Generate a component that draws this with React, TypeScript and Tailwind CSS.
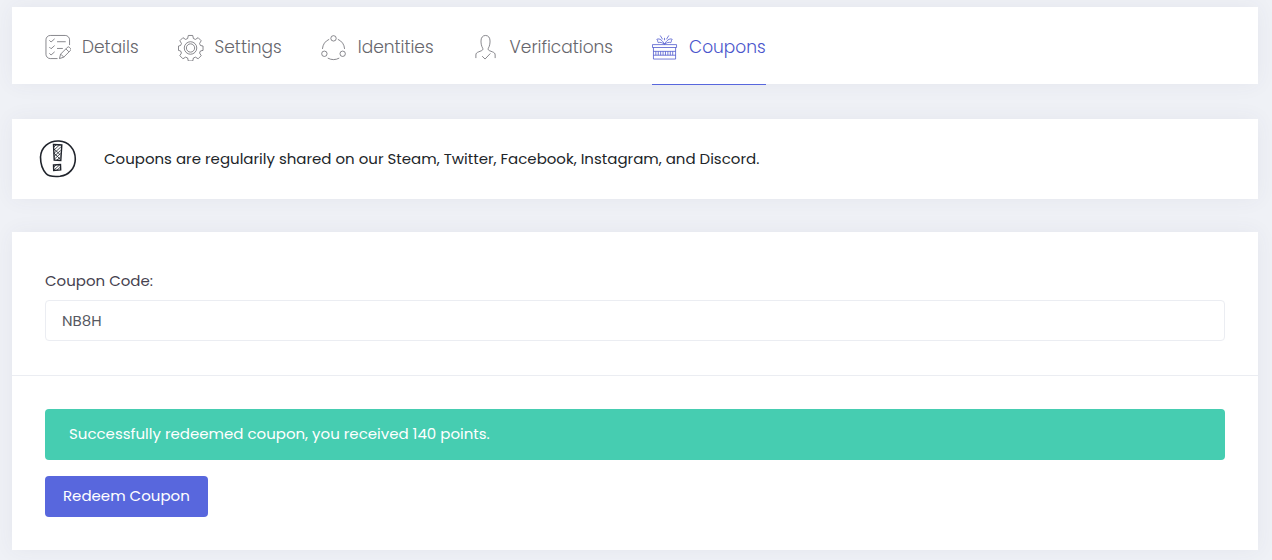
import React, { useState } from 'react';

interface Tab {
  name: string;
  icon: React.ReactNode;
}

const DetailsIcon = () => (
  <>
    <path d="M25.500 11V5.500a4.500 4.500 0 0 0-4.500-4.500H5.500A4.500 4.500 0 0 0 1 5.500V20.500a4.500 4.500 0 0 0 4.500 4.500H13" />
    <path d="M4.500 6l1.800 1.800L10 4.500M4.500 13l1.800 1.800L10 11.500M4.500 19.500l1.800 1.800L10 18M12.500 7.500h9M12.500 14.500h6" />
    <path d="M15 25l1.200-4.600 7-7a1.500 1.500 0 0 1 2.200 0l1 1a1.500 1.500 0 0 1 0 2.200l-7 7L15 25zM16.500 20.500l3 3M21.800 15l3 3" />
  </>
);

const SettingsIcon = () => (
  <>
    <path d="M10.700 1h4.600l.7 3.200 2.100.9 2.800-1.800 3.200 3.200-1.700 2.800.9 2.100 2.700.6v4.500l-2.700.6-.9 2.100 1.700 2.800-3.200 3.200-2.800-1.700-2.100.9-.7 3.100h-4.600l-.7-3.100-2.100-.9-2.800 1.700L1.900 22l1.700-2.800-.9-2.100L.5 16.500V12l2.200-.6.9-2.100-1.700-2.800 3.200-3.200 2.800 1.800 2.100-.9z" strokeLinejoin="round" />
    <circle cx="13" cy="14" r="6.500" />
    <circle cx="13" cy="14" r="4.300" />
  </>
);

const IdentitiesIcon = () => (
  <>
    <circle cx="13" cy="4" r="2.800" />
    <circle cx="3.500" cy="20" r="2.800" />
    <circle cx="22.500" cy="20" r="2.800" />
    <path d="M8.500 5A12 12 0 0 0 1.500 15M17.500 5A12 12 0 0 1 24.500 15M7 24.500a13 13 0 0 0 12 0" />
  </>
);

const VerificationsIcon = () => (
  <>
    <path d="M3 24.500v-3.200c0-1.800 1-2.600 2.700-3.200l3.400-1.400c1.200-.5 1.500-1.700.8-2.800C8.800 12 8.300 9.500 8.300 6.800 8.300 3.300 10 1 13 1s4.700 2.300 4.700 5.800c0 2.700-.5 5.200-1.600 7.100-.7 1.100-.4 2.300.8 2.800l3.400 1.400c1.700.6 2.700 1.400 2.700 3.200v3.200" />
    <path d="M9.500 22.500l3 3 5.500-5.800" />
  </>
);

const CouponsIcon = () => (
  <>
    <path d="M.5 10.500h25v3H.5zM1.500 13.500v12h23v-12M1.500 17.500h23M1.500 21.500h23" />
    <path d="M4 17.500v4M6.500 17.500v4M9 17.500v4M11.500 17.500v4M14 17.500v4M16.500 17.500v4M19 17.500v4M21.500 17.500v4" />
    <path d="M13 10C11 6.500 8 3.500 5 5c1.500 1 .5 2.500 1.500 3.500 2-1 4 0 6.500 1.500zM13 10c2-3.500 5-6.500 8-5-1.500 1-.5 2.500-1.500 3.500-2-1-4 0-6.500 1.500zM11 5L8.500 1M13 6V3.500M15 5l2.500-4" strokeWidth=".8" />
  </>
);

const tabs: Tab[] = [
  { name: 'Details', icon: <DetailsIcon /> },
  { name: 'Settings', icon: <SettingsIcon /> },
  { name: 'Identities', icon: <IdentitiesIcon /> },
  { name: 'Verifications', icon: <VerificationsIcon /> },
  { name: 'Coupons', icon: <CouponsIcon /> },
];

const NoticeIcon = () => (
  <svg className="h-10 w-10 shrink-0" viewBox="0 0 40 40" fill="none" stroke="#20242c" aria-hidden="true">
    <path d="M21 2C11 1.500 3 8 2.500 18c0 6 1.500 12 5.500 16.500 2.500 3 8 3.300 14 2.800 9-1 15.300-8.300 15.300-17.300C37.300 10 30.500 2.500 21 2z" strokeWidth="1.600" />
    <path d="M15.500 5.500l8.300.5-1 15.500-6.600-.5zM15.500 26l7-.4.2 5.300-7 .5z" strokeWidth="1.400" />
    <path d="M15.500 8.500l3-3M15.500 11.500l6.500-6M15.800 14.500l7-6.500M16 17.500l6.500-6M16 20.500l6.500-6M19 21l3.500-3M16 10l6.500 6M16 14l6 6M16 28l2.500-2.300M16 31l5.500-5M19 31l3.500-3" strokeWidth=".8" />
  </svg>
);

const App: React.FC = () => {
  const [activeTab, setActiveTab] = useState('Coupons');
  const [code, setCode] = useState('NB8H');

  return (
    <div className="min-h-screen bg-[#eff1f6] pt-[7px] pr-3.5 pb-2.5 pl-3 font-['Poppins','Inter',sans-serif] text-[15px] text-[#212529]">
      <nav className="mb-[35px] flex h-[77px] gap-[39px] bg-white px-[33px] shadow-[0_0_20px_rgba(60,70,110,0.06)]">
        {tabs.map(tab => (
          <button
            key={tab.name}
            type="button"
            onClick={() => setActiveTab(tab.name)}
            className={`flex h-[78px] items-center gap-[11px] border-b pt-1 text-[17px] font-light ${
              activeTab === tab.name ? 'border-[#5867dd] text-[#4a55cc]' : 'border-transparent text-[#66666c]'
            }`}
          >
            <svg className="h-[27px] w-[26px] shrink-0" viewBox="0 0 27 27" fill="none" stroke="currentColor" strokeWidth=".8" aria-hidden="true">
              {tab.icon}
            </svg>
            {tab.name}
          </button>
        ))}
      </nav>

      <section className="mb-[33px] flex h-20 items-center gap-[26px] bg-white px-[26px] shadow-[0_0_20px_rgba(60,70,110,0.06)]">
        <NoticeIcon />
        <p>Coupons are regularily shared on our Steam, Twitter, Facebook, Instagram, and Discord.</p>
      </section>

      <form className="bg-white shadow-[0_0_20px_rgba(60,70,110,0.06)]" onSubmit={e => e.preventDefault()}>
        <div className="border-b border-[#ebedf2] px-[33px] pt-[37px] pb-[34px]">
          <label htmlFor="coupon-code" className="mb-[7px] block leading-6 text-[#46424f]">Coupon Code:</label>
          <input
            id="coupon-code"
            type="text"
            value={code}
            onChange={e => setCode(e.target.value)}
            className="block h-[41px] w-full rounded border border-[#ebedf2] px-4 text-[#575962] outline-none"
          />
        </div>
        <div className="px-[33px] py-[33px]">
          <div role="status" className="mb-4 flex h-[51px] items-center rounded bg-[#46cdb1] px-6 text-white">
            Successfully redeemed coupon, you received 140 points.
          </div>
          <button type="submit" className="block h-[41px] rounded bg-[#5867dd] px-[18px] text-white">
            Redeem Coupon
          </button>
        </div>
      </form>
    </div>
  );
};

export default App;
